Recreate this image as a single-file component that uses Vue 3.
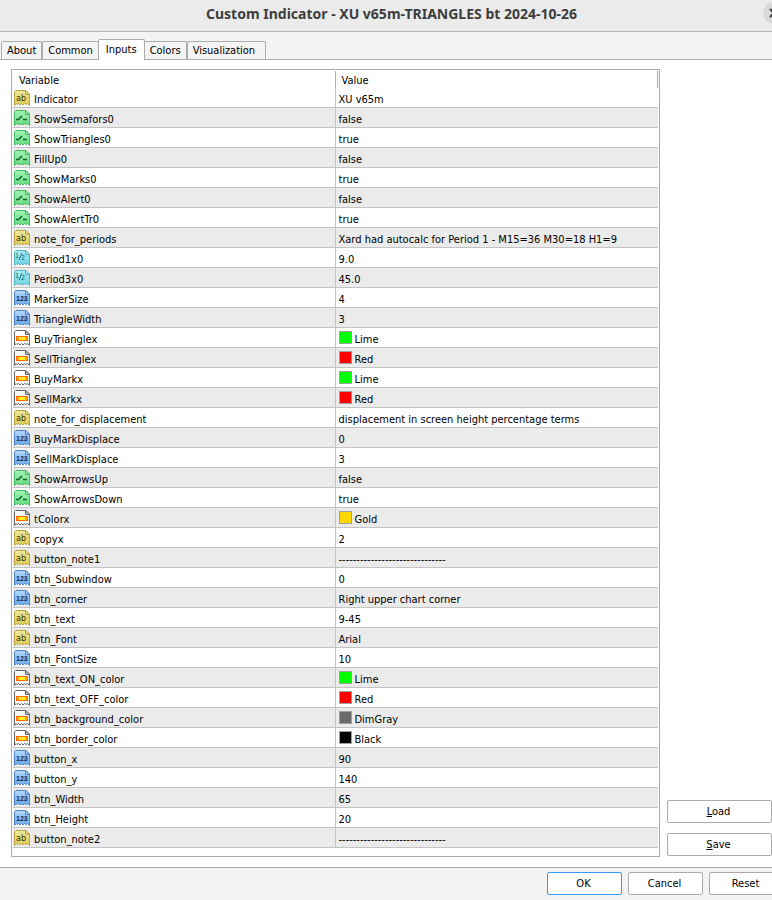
<script setup>
import { ref } from 'vue'

const tabs = ['About', 'Common', 'Inputs', 'Colors', 'Visualization']
const active = ref('Inputs')

const swatches = { Lime: '#00ff00', Red: '#ff0000', Gold: '#ffd700', DimGray: '#696969', Black: '#000000' }
const dashes = '-'.repeat(30)

const gradients = [
  { id: 'text', from: '#f1ea9c', to: '#dccb55' },
  { id: 'bool', from: '#a4f3b4', to: '#62dc7e' },
  { id: 'real', from: '#a9edf4', to: '#6fd3e0' },
  { id: 'int', from: '#b4d8fb', to: '#66a9ec' },
  { id: 'color', from: '#ffffff', to: '#f4f4f4' },
]

const rows = [
  ['text', 'Indicator', 'XU v65m'],
  ['bool', 'ShowSemafors0', 'false'],
  ['bool', 'ShowTriangles0', 'true'],
  ['bool', 'FillUp0', 'false'],
  ['bool', 'ShowMarks0', 'true'],
  ['bool', 'ShowAlert0', 'false'],
  ['bool', 'ShowAlertTr0', 'true'],
  ['text', 'note_for_periods', 'Xard had autocalc for Period 1 - M15=36 M30=18 H1=9'],
  ['real', 'Period1x0', '9.0'],
  ['real', 'Period3x0', '45.0'],
  ['int', 'MarkerSize', '4'],
  ['int', 'TriangleWidth', '3'],
  ['color', 'BuyTrianglex', 'Lime'],
  ['color', 'SellTrianglex', 'Red'],
  ['color', 'BuyMarkx', 'Lime'],
  ['color', 'SellMarkx', 'Red'],
  ['text', 'note_for_displacement', 'displacement in screen height percentage terms'],
  ['int', 'BuyMarkDisplace', '0'],
  ['int', 'SellMarkDisplace', '3'],
  ['bool', 'ShowArrowsUp', 'false'],
  ['bool', 'ShowArrowsDown', 'true'],
  ['color', 'tColorx', 'Gold'],
  ['text', 'copyx', '2'],
  ['text', 'button_note1', dashes],
  ['int', 'btn_Subwindow', '0'],
  ['int', 'btn_corner', 'Right upper chart corner'],
  ['text', 'btn_text', '9-45'],
  ['text', 'btn_Font', 'Arial'],
  ['int', 'btn_FontSize', '10'],
  ['color', 'btn_text_ON_color', 'Lime'],
  ['color', 'btn_text_OFF_color', 'Red'],
  ['color', 'btn_background_color', 'DimGray'],
  ['color', 'btn_border_color', 'Black'],
  ['int', 'button_x', '90'],
  ['int', 'button_y', '140'],
  ['int', 'btn_Width', '65'],
  ['int', 'btn_Height', '20'],
  ['text', 'button_note2', dashes],
].map(([type, name, value]) => ({ type, name, value }))
</script>

<template>
  <div class="dialog">
    <svg class="defs" width="0" height="0" aria-hidden="true">
      <defs>
        <linearGradient v-for="g in gradients" :id="'sheet-' + g.id" :key="g.id" x1="0" y1="0" x2="0" y2="1">
          <stop offset="0" :stop-color="g.from" />
          <stop offset="1" :stop-color="g.to" />
        </linearGradient>
      </defs>
    </svg>

    <header class="titlebar">
      <h1>Custom Indicator - XU v65m-TRIANGLES bt 2024-10-26</h1>
      <button class="close" type="button" aria-label="Close">
        <svg viewBox="0 0 22 22" width="22" height="22"><path d="M7 7l8 8M15 7l-8 8" stroke="#3d3d3d" stroke-width="2" /></svg>
      </button>
    </header>

    <nav class="tabs" role="tablist">
      <button
        v-for="t in tabs" :key="t" type="button" role="tab"
        class="tab" :class="{ active: t === active }" :aria-selected="t === active"
        @click="active = t"
      >{{ t }}</button>
    </nav>

    <main class="panel">
      <div class="grid">
        <table>
          <thead>
            <tr><th class="name-col">Variable</th><th>Value</th></tr>
          </thead>
          <tbody>
            <tr v-for="r in rows" :key="r.name">
              <td class="name">
                <span class="cell">
                  <svg class="icon" :class="r.type" viewBox="0 0 16 16" width="16" height="16" aria-hidden="true">
                    <path
                      class="sheet" :fill="`url(#sheet-${r.type})`"
                      d="M1.500.5H12L15.500 4V15.500L13.500 13.500L12 14.500L10.500 13.500L9 15L7.500 13.500L6 15L4.500 13.500L3 14.500L2 13.500L.5 15.500V1.500Z"
                    />
                    <path class="fold" d="M11.500 1V4.500H15Z" />
                    <text v-if="r.type === 'text'" class="glyph ab" x="2" y="11">ab</text>
                    <text v-else-if="r.type === 'int'" class="glyph num" x="2" y="11">123</text>
                    <g v-else-if="r.type === 'real'">
                      <text class="glyph half" x="1" y="8">1</text>
                      <path class="slash" d="M5 10L8 3" />
                      <text class="glyph half" x="7" y="10">2</text>
                    </g>
                    <path v-else-if="r.type === 'bool'" class="switch" d="M2 9.500H4.500L8 6M9 9.500H13" />
                    <g v-else>
                      <rect x="2" y="6" width="12" height="5" fill="#ff6a00" />
                      <rect x="3" y="7" width="10" height="3" fill="#ffa800" />
                      <rect x="5" y="7" width="6" height="3" fill="#ffee20" />
                    </g>
                  </svg>
                  <span class="label">{{ r.name }}</span>
                </span>
              </td>
              <td class="value">
                <span class="cell">
                  <i v-if="r.type === 'color'" class="swatch" :style="{ background: swatches[r.value] }"></i>
                  <span class="label">{{ r.value }}</span>
                </span>
              </td>
            </tr>
          </tbody>
        </table>
      </div>
      <aside class="side">
        <button class="btn" type="button"><u>L</u>oad</button>
        <button class="btn" type="button"><u>S</u>ave</button>
      </aside>
    </main>

    <footer class="actions">
      <button class="btn primary" type="button">OK</button>
      <button class="btn" type="button">Cancel</button>
      <button class="btn" type="button">Reset</button>
    </footer>
  </div>
</template>

<style>
body { background: #f4f4f4; }
</style>

<style scoped>
.dialog {
  display: flex;
  flex-direction: column;
  min-height: 100vh;
  overflow: hidden;
  box-sizing: border-box;
  font: 11px/16px "DejaVu Sans Condensed", "DejaVu Sans", sans-serif;
  color: #000;
  background: #f4f4f4;
}
.defs { position: absolute; }
button { font: inherit; color: inherit; margin: 0; cursor: pointer; }

.titlebar {
  display: flex;
  align-items: center;
  height: 31px;
  background: #ebebeb;
  border-bottom: 1px solid #b4b4b4;
}
h1 {
  flex: 1;
  margin: 0 -20px 0 0;
  padding-bottom: 3px;
  text-align: center;
  font: bold 14px/20px "Noto Sans", sans-serif;
  color: #3d3d3d;
}
.close {
  flex: none;
  width: 22px;
  height: 22px;
  margin: 0 -13px 5px 0;
  padding: 0;
  border: 0;
  border-radius: 50%;
  background: #d9d9d9;
}
.close svg { display: block; }

.tabs {
  display: flex;
  align-items: flex-end;
  height: 27px;
  padding-left: 1px;
  border-bottom: 1px solid #ababab;
}
.tab {
  height: 18px;
  padding: 0 5px;
  border: 1px solid #ababab;
  border-bottom: 0;
  border-radius: 2px 2px 0 0;
  background: #f4f4f4;
  line-height: 17px;
}
.tab:last-child { padding-right: 10px; }
.tab.active {
  position: relative;
  height: 21px;
  margin: 0 -1px -1px;
  padding: 0 7px 2px;
  background: #fff;
}

.panel {
  display: flex;
  gap: 7px;
  padding: 9px 0 10px 11px;
  background: #fff;
  border-bottom: 1px solid #ababab;
}
.grid {
  flex: 1;
  padding: 1px 1px 8px;
  border: 1px solid #ababab;
}
table {
  width: 100%;
  table-layout: fixed;
  border-collapse: separate;
  border-spacing: 0;
}
th {
  height: 15px;
  padding: 2px 6px 0;
  text-align: left;
  font-weight: normal;
  line-height: 15px;
  border-right: 1px solid #ababab;
}
.name-col { width: 50%; box-sizing: border-box; height: 17px; }
td {
  height: 19px;
  padding: 0;
  border-bottom: 1px solid #c3c3c3;
}
tbody tr:nth-child(even) { background: #ebebeb; }
.cell {
  display: flex;
  align-items: center;
  height: 19px;
  white-space: nowrap;
}
.label { line-height: 19px; padding-top: 4px; }
.name { border-right: 1px solid #c3c3c3; }
.name .cell { gap: 4px; padding-left: 1px; }
.value .cell { gap: 3px; padding-left: 3px; }
.swatch {
  box-sizing: border-box;
  width: 13px;
  height: 13px;
  border: 1px solid #a0a0a0;
}

.icon { flex: none; margin-top: 1px; }
.sheet, .fold { stroke-width: 1; }
.text .sheet, .text .fold { stroke: #b5a348; }
.text .fold { fill: #f6efb0; }
.bool .sheet, .bool .fold { stroke: #46b862; }
.bool .fold { fill: #c4f8ce; }
.real .sheet, .real .fold { stroke: #57b4c2; }
.real .fold { fill: #c9f5f9; }
.int .sheet, .int .fold { stroke: #5088c4; }
.int .fold { fill: #cbe4fc; }
.color .sheet, .color .fold { stroke: #666; }
.color .fold { fill: #ddd; }
.switch { fill: none; stroke: #14602a; stroke-width: 1.5; }
.slash { fill: none; stroke: #1a6f80; stroke-width: 1; }
.glyph { font-family: "DejaVu Sans Condensed", "DejaVu Sans", sans-serif; }
.ab { font-size: 9px; fill: #3c3000; }
.num { font: bold 7px "Liberation Sans", sans-serif; fill: #0b2c5a; }
.half { font-size: 7px; fill: #0c5a68; }

.side {
  flex: none;
  width: 105px;
  display: flex;
  flex-direction: column;
  justify-content: flex-end;
  gap: 10px;
  padding-bottom: 1px;
}
.btn {
  flex: none;
  height: 23px;
  padding: 1px 2px 0 0;
  border: 1px solid #ababab;
  border-radius: 2px;
  background: #fff;
}
.actions {
  display: flex;
  justify-content: flex-end;
  gap: 6px;
  margin-right: -12px;
  padding: 4px 0;
}
.actions .btn { width: 75px; }
.actions .primary { border-color: #3399ff; }

/* the name column ends just short of the middle */
.name-col { width: calc(50% - 2px); }
</style>
